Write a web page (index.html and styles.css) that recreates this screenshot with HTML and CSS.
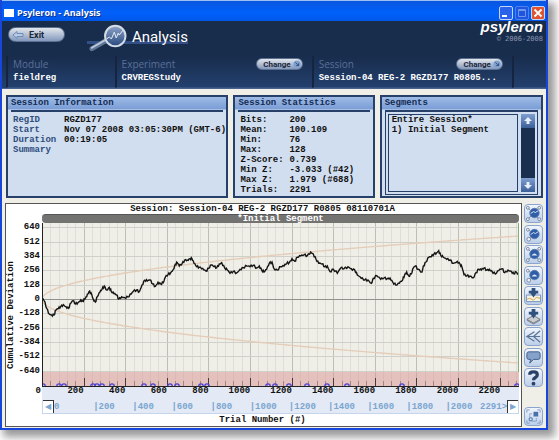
FILE: index.html
```html
<!DOCTYPE html>
<html lang="en">
<head>
    <meta charset="utf-8">
    <title>Psyleron - Analysis</title>
    <link rel="stylesheet" href="styles.css">
</head>
<body>
    <div class="window">
        <div class="titlebar">
            <span class="app-icon"></span>
            <span class="title">Psyleron - Analysis</span>
            <button class="win-btn" aria-label="Minimize"><svg viewBox="0 0 12 12"><path d="M2 9h5" stroke="#fff" stroke-width="2"/></svg></button>
            <button class="win-btn dim" aria-label="Maximize"><svg viewBox="0 0 12 12"><path d="M2.500 2.500h7v7h-7zM2.500 3.500h7" stroke="#6f97f0" fill="none"/></svg></button>
            <button class="win-btn close" aria-label="Close"><svg viewBox="0 0 12 12"><path d="M2.500 2.500l7 7M9.500 2.500l-7 7" stroke="#fff" stroke-width="1.800"/></svg></button>
        </div>

        <header class="header">
            <div class="header-top">
                <button class="pill exit">
                    <svg viewBox="0 0 12 10"><path d="M1 5l4-3.500v2h6v3H5v2z" fill="#b9cbe4" stroke="#6d8cb8"/></svg>
                    Exit
                </button>
                <div class="heading">
                    <svg class="lens" viewBox="0 0 44 34">
                        <defs>
                            <linearGradient id="glass" x1="0" y1="0" x2="0" y2="1">
                                <stop offset="0" stop-color="#8fa5c9"/>
                                <stop offset="1" stop-color="#27487d"/>
                            </linearGradient>
                        </defs>
                        <path d="M5 28l14-8" stroke="#5f7596" stroke-width="5" stroke-linecap="round"/>
                        <path d="M5 27l14-8" stroke="#b9c8dc" stroke-width="2" stroke-linecap="round"/>
                        <circle cx="29" cy="15" r="10.500" fill="url(#glass)" stroke="#d3dbe6" stroke-width="2"/>
                        <path d="M20 18l3-2 2 2 3-7 2 6 2-5 1 2 4-5" fill="none" stroke="#e8eef7"/>
                    </svg>
                    <h1>Analysis</h1>
                </div>
                <div class="brand">
                    <span class="logo">psyleron</span>
                    <span class="copy">© 2006-2008</span>
                </div>
            </div>
            <div class="tabs">
                <div class="tab">
                    <span class="tab-name">Module</span>
                    <span class="tab-value">fieldreg</span>
                </div>
                <div class="tab">
                    <span class="tab-name">Experiment</span>
                    <button class="pill change">Change <svg viewBox="0 0 10 10"><circle cx="5" cy="5" r="4.500" fill="#7f9fcd"/><path d="M3 3l4 4M7 4v3H4" stroke="#27487d" fill="none"/></svg></button>
                    <span class="tab-value">CRVREGStudy</span>
                </div>
                <div class="tab">
                    <span class="tab-name">Session</span>
                    <button class="pill change">Change <svg viewBox="0 0 10 10"><circle cx="5" cy="5" r="4.500" fill="#7f9fcd"/><path d="M3 3l4 4M7 4v3H4" stroke="#27487d" fill="none"/></svg></button>
                    <span class="tab-value">Session-04 REG-2 RGZD177 R0805...</span>
                </div>
                <div class="tab"></div>
            </div>
        </header>

        <div class="panels">
            <section class="panel">
                <h2>Session Information</h2>
                <dl class="info">
                    <dt>RegID</dt><dd>RGZD177</dd>
                    <dt>Start</dt><dd>Nov 07 2008 03:05:30PM (GMT-6)</dd>
                    <dt>Duration</dt><dd>00:19:05</dd>
                    <dt>Summary</dt><dd></dd>
                </dl>
            </section>
            <section class="panel">
                <h2>Session Statistics</h2>
                <dl class="info stats">
                    <dt>Bits:</dt><dd>200</dd>
                    <dt>Mean:</dt><dd>100.109</dd>
                    <dt>Min:</dt><dd>76</dd>
                    <dt>Max:</dt><dd>128</dd>
                    <dt>Z-Score:</dt><dd>0.739</dd>
                    <dt>Min Z:</dt><dd>-3.033 (#42)</dd>
                    <dt>Max Z:</dt><dd>1.979 (#688)</dd>
                    <dt>Trials:</dt><dd>2291</dd>
                </dl>
            </section>
            <section class="panel">
                <h2><label for="segments">Segments</label></h2>
                <div class="listbox">
                    <select id="segments" size="7">
                        <option>Entire Session*</option>
                        <option>1) Initial Segment</option>
                    </select>
                    <div class="scrollbar">
                        <button aria-label="Scroll up"><svg viewBox="0 0 10 10"><path d="M5 1l4 4H6.500v3h-3V5H1z" fill="#e6eefa"/></svg></button>
                        <button aria-label="Scroll down"><svg viewBox="0 0 10 10"><path d="M5 9l4-4H6.500V2h-3v3H1z" fill="#e6eefa"/></svg></button>
                    </div>
                </div>
            </section>
        </div>

        <div class="work">
            <section class="chart">
                <h2 class="chart-title">Session: Session-04 REG-2 RGZD177 R0805 08110701A</h2>
                <div class="chart-body">
                    <div class="y-title">Cumulative Deviation</div>
                    <div class="y-axis">
                        <span>640</span><span>512</span><span>384</span><span>256</span><span>128</span><span>0</span>
                        <span>-128</span><span>-256</span><span>-384</span><span>-512</span><span>-640</span>
                    </div>
                    <div class="plot">
                        <div class="segment-bar">*Initial Segment</div>
                        <svg id="plot" viewBox="0 0 477 164" preserveAspectRatio="none"></svg>
                    </div>
                </div>
                <div class="x-axis">
                    <span class="zero">0</span>
                    <div class="x-labels">
                        <span>200</span><span>400</span><span>600</span><span>800</span><span>1000</span><span>1200</span>
                        <span>1400</span><span>1600</span><span>1800</span><span>2000</span><span>2200</span><span class="rest"></span>
                    </div>
                </div>
                <div class="range">
                    <button class="handle left" aria-label="Range start">◀</button>
                    <div class="range-labels">
                        <span>0</span><span>|200</span><span>|400</span><span>|600</span><span>|800</span><span>|1000</span>
                        <span>|1200</span><span>|1400</span><span>|1600</span><span>|1800</span><span class="last"><i>|2000</i><i>2291&gt;</i></span>
                    </div>
                    <button class="handle right" aria-label="Range end">▶</button>
                </div>
                <div class="x-title">Trial Number (#)</div>
            </section>

            <div class="tools">
                <div class="tool-group">
                    <button class="tool" aria-label="Zoom in both"><svg viewBox="0 0 18 18"><use href="#corners"/><use href="#globe"/><path d="M6 9l3-2 2 1 3-2" stroke="#dce8f8" fill="none"/></svg></button>
                    <button class="tool" aria-label="Zoom out both"><svg viewBox="0 0 18 18"><use href="#side"/><use href="#globe"/><path d="M6 9l3-2 2 1 3-2" stroke="#dce8f8" fill="none"/></svg></button>
                    <button class="tool" aria-label="Zoom in scale"><svg viewBox="0 0 18 18"><use href="#corners"/><use href="#globe"/><path d="M7 10q3-4 6 0z" fill="#dce8f8"/></svg></button>
                    <button class="tool" aria-label="Zoom out scale"><svg viewBox="0 0 18 18"><use href="#side"/><use href="#globe"/><path d="M7 10q3-4 6 0z" fill="#dce8f8"/></svg></button>
                    <button class="tool" aria-label="Save picture"><svg viewBox="0 0 18 18"><path d="M1.500 8.500h15v7h-15z" fill="#f6f3e4" stroke="#6f8fc0"/><path d="M2 13l3-1 4 2 3-3 4 1" stroke="#d9a441" fill="none"/><use href="#down"/></svg></button>
                    <button class="tool" aria-label="Save data"><svg viewBox="0 0 18 18"><path d="M2 12l7-4 7 4-7 4z" fill="#c9ccd0" stroke="#75797f"/><path d="M2 12v1.500l7 4 7-4V12l-7 4z" fill="#85898f"/><use href="#down"/></svg></button>
                    <button class="tool" aria-label="Back"><svg viewBox="0 0 18 18"><path d="M16 3L9 9l7 6M10 4L2 9l8 5M2 9h14" stroke="#5b7595" stroke-width="1.300" fill="none"/></svg></button>
                    <button class="tool" aria-label="Comment"><svg viewBox="0 0 18 18"><path d="M4 3h10q2 0 2 2v4q0 2-2 2H9l-4 4 1-4H4q-2 0-2-2V5q0-2 2-2z" fill="#86a2cb" stroke="#3d5a86"/></svg></button>
                    <button class="tool" aria-label="Help"><svg viewBox="0 0 18 18"><path d="M5 6q0-3 4-3t4 3q0 2-2 3t-2 3" stroke="#2a4167" stroke-width="3.500" fill="none"/><circle cx="9" cy="15.500" r="2" fill="#2a4167"/></svg></button>
                </div>
                <button class="tool" aria-label="Fit window"><svg viewBox="0 0 18 18"><path d="M2 5V2h3M13 2h3v3M16 13v3h-3M5 16H2v-3" stroke="#7f9ac4" fill="none"/><path d="M9 4h5v5H9z" fill="#4a71ab"/><path d="M4.500 10.500h3v3h-3z" fill="#dfe8f5" stroke="#4a71ab"/><path d="M8 14h4v-4M5 9V6h3" stroke="#4a71ab" stroke-dasharray="1 1" fill="none"/></svg></button>
            </div>
        </div>
    </div>

    <!-- shared icon parts -->
    <svg class="defs">
        <symbol id="globe" viewBox="0 0 18 18"><circle cx="10" cy="8.500" r="5" fill="#2f5da6" stroke="#5d80b6"/></symbol>
        <symbol id="corners" viewBox="0 0 18 18"><path d="M3 3l12 12M15 3L3 15" stroke="#76859c"/><g fill="#eef2f8" stroke="#76859c"><circle cx="3" cy="3" r="1.500"/><circle cx="15" cy="3" r="1.500"/><circle cx="3" cy="15" r="1.500"/><circle cx="15" cy="15" r="1.500"/></g></symbol>
        <symbol id="side" viewBox="0 0 18 18"><path d="M3 4l7 4-7 6" stroke="#76859c" fill="none"/><g fill="#eef2f8" stroke="#76859c"><circle cx="3" cy="4" r="1.500"/><circle cx="4" cy="14" r="2"/></g></symbol>
        <symbol id="down" viewBox="0 0 18 18"><path d="M7 1h4v3h3v3h-2l-3 4-3-4H4V4h3z" fill="#31517f"/></symbol>
    </svg>

    <script src="script.js"></script>
</body>
</html>
```

FILE: styles.css
```css
* {
    box-sizing: border-box;
}

body {
    margin: 0;
    padding: 0 11px 11px 0;
    background: #fff;
    font-family: "Liberation Mono", monospace;
    font-size: 9px;
    font-weight: bold;
    line-height: 10px;
    color: #111;
}

h1, h2, dl, dd {
    margin: 0;
    font-size: inherit;
}

button {
    padding: 0;
    border: 0;
    font: inherit;
    cursor: pointer;
}

svg {
    display: block;
}

.defs {
    position: absolute;
    width: 0;
    height: 0;
}

.window {
    border: solid #1746dc;
    border-width: 0 2px 2px;
    background: #efeee7;
    box-shadow: 5px 5px 8px 2px #999;
}

/* title bar */
.titlebar {
    display: flex;
    align-items: center;
    gap: 2px;
    height: 21px;
    padding: 3px 1px 0 2px;
    border-top: 1px solid #9dbdf5;
    background: linear-gradient(#0a56e0, #0061fb 60%, #0057e8);
    color: #fff;
}

.app-icon {
    width: 10px;
    height: 8px;
    background: #fff;
}

.title {
    flex: 1;
    padding-left: 1px;
    font: bold 9px "Open Sans", sans-serif;
    text-shadow: 1px 1px #0a2f8c;
}

.win-btn {
    width: 14px;
    height: 14px;
    border: 1px solid #c3d5fb;
    border-radius: 2px;
    background: #2a62ea;
}

.win-btn.dim {
    border-color: #4f80ee;
    background: #1d56dd;
}

.win-btn.close {
    background: #df5531;
}

/* header */
.header {
    background: linear-gradient(#182c4b 50%, #23406e);
    border-bottom: 1px solid #47628f;
}

.header-top {
    display: flex;
    align-items: flex-start;
    height: 35px;
    padding: 0 3px 0 6px;
}

.pill {
    display: flex;
    align-items: center;
    border: 1px solid #5d7190;
    border-radius: 8px;
    background: linear-gradient(#e3e7ed, #8398bd);
    color: #1c2738;
    font: bold 9px "Roboto", sans-serif;
}

.exit {
    gap: 5px;
    width: 57px;
    height: 15px;
    margin-top: 6px;
    padding-left: 3px;
}

.exit svg {
    width: 12px;
    height: 10px;
}

.heading {
    display: flex;
    width: 101px;
    margin-left: 22px;
    background: linear-gradient(#334f86, #334f86) 0 20px / 100% 3px no-repeat;
}

.lens {
    width: 44px;
    height: 34px;
}

h1 {
    padding: 4px 0 0 2px;
    color: #fff;
    font: 15px/24px "Roboto", sans-serif;
}

.brand {
    display: flex;
    flex-direction: column;
    align-items: flex-end;
    margin-left: auto;
}

.logo {
    height: 14px;
    color: #fff;
    font: italic bold 15px/11px "Liberation Sans", sans-serif;
}

.copy {
    color: #8896b2;
    font: 7px/8px "DejaVu Sans Mono", monospace;
}

.tabs {
    display: grid;
    grid-template-columns: 108fr 196fr 199fr 34fr;
    height: 32px;
    padding-left: 4px;
}

.tab {
    display: grid;
    grid-template-columns: 1fr auto;
    grid-template-rows: 16px 1fr;
    align-items: center;
    padding: 0 9px 3px 5px;
    border-left: 2px solid #15253f;
    border-bottom: 1px solid #35517f;
}

.tab-name {
    color: #5a6f97;
    font: 10px/14px "Open Sans", sans-serif;
}

.tab-value {
    grid-column: 1 / -1;
    color: #fff;
    white-space: nowrap;
}

.change {
    gap: 2px;
    height: 12px;
    padding: 0 1px 0 6px;
    font-size: 8px;
}

.change svg {
    width: 8px;
    height: 8px;
}

/* information panels */
.panels {
    display: grid;
    grid-template-columns: 222fr 141fr 163fr;
    gap: 5px;
    padding: 6px 3px 5px 4px;
}

.panel {
    min-width: 0;
    height: 103px;
    padding: 0 3px;
    border: 2px solid #264069;
    background: linear-gradient(#9fbce6, #7a9dd6 12px, #d1deef 13px);
    white-space: nowrap;
}

.panel h2 {
    height: 15px;
    padding-top: 1px;
    border-bottom: 2px solid #264069;
    color: #142c52;
}

.info {
    display: grid;
    grid-template-columns: 51px 1fr;
    grid-auto-rows: 10px;
    padding: 3px 0 0 2px;
}

.info dt {
    color: #2f4d7d;
}

.stats {
    grid-template-columns: 49px 1fr;
}

.stats dt {
    color: #111;
}

.listbox {
    display: flex;
    gap: 3px;
    height: 83px;
    padding: 2px;
    border: 1px solid #264069;
    border-top: 0;
}

.listbox select {
    flex: 1;
    min-width: 0;
    padding: 0;
    border: 1px solid #264069;
    border-radius: 0;
    outline: 0;
    overflow: hidden;
    background: transparent;
    color: #111;
    font: inherit;
}

.listbox option {
    min-height: 0;
    padding: 0 3px;
    font-weight: bold;
    line-height: 10px;
}

.scrollbar {
    display: flex;
    flex-direction: column;
    justify-content: space-between;
    width: 14px;
    background: #1a2e50;
}

.scrollbar button {
    height: 14px;
    padding: 2px;
    background: linear-gradient(#7f9fd0, #3c5f99);
}

/* chart */
.work {
    display: flex;
    gap: 2px;
    padding: 0 3px 1px 3px;
}

.chart {
    flex: 1;
    min-width: 0;
    padding-right: 2px;
    border: 1px solid #555;
    background: #fff;
}

.chart-title {
    height: 10px;
    text-align: center;
}

.chart-body {
    display: flex;
    height: 173px;
}

.y-title {
    width: 10px;
    padding-top: 18px;
    writing-mode: vertical-rl;
    transform: rotate(180deg);
    text-align: left;
}

.y-axis {
    display: flex;
    flex-direction: column;
    width: 26px;
    padding: 6px 2px 9px 0;
    text-align: right;
}

.y-axis span {
    display: flex;
    flex: 1;
    align-items: center;
    justify-content: flex-end;
}

.plot {
    flex: 1;
    min-width: 0;
    background: #efefe8;
}

.segment-bar {
    height: 9px;
    border-top: 1px solid #555;
    border-radius: 4px;
    background: #737371;
    color: #fff;
    line-height: 8px;
    text-align: center;
}

#plot {
    width: 100%;
    height: 164px;
}

.x-axis {
    display: flex;
    height: 13px;
    line-height: 9px;
}

.zero {
    width: 36px;
    padding-right: 1px;
    text-align: right;
}

.x-labels {
    display: flex;
    flex: 1;
    background: #e3e9f5;
}

.x-labels span {
    flex: 200 1 0;
    min-width: 0;
    text-align: right;
}

.x-labels .rest {
    flex-grow: 91;
}

.range {
    display: flex;
    height: 14px;
    margin-left: 36px;
    border: 1px solid #c5d5ec;
    border-top: 0;
    background: #e3e9f5;
    color: #7ba6d0;
    line-height: 14px;
}

.range-labels {
    display: flex;
    flex: 1;
}

.range-labels span {
    flex: 200 1 0;
    min-width: 0;
}

.range-labels .last {
    display: flex;
    flex-grow: 315;
    justify-content: space-between;
}

.range-labels i {
    font-style: normal;
}

.handle {
    width: 11px;
    background: #fff;
    color: #7ba6d0;
    font: 8px/12px "DejaVu Sans", sans-serif;
}

.handle.left {
    border-top: 1px solid #333;
    border-right: 1px solid #333;
}

.handle.right {
    border-top: 1px solid #333;
    border-left: 1px solid #333;
}

.x-title {
    height: 12px;
    line-height: 13px;
    text-align: center;
}

/* tool buttons */
.tools {
    display: flex;
    flex-direction: column;
    justify-content: space-between;
    padding: 1px 0;
}

.tool-group {
    display: flex;
    flex-direction: column;
    justify-content: space-between;
    height: 183px;
}

.tool {
    width: 19px;
    height: 19px;
    border: 1px solid #8ba5cf;
    border-radius: 4px;
    background: linear-gradient(#f0f5fc, #bccfe9);
}
```

FILE: script.js
```js
var W = 477, H = 164;
var STEP = 41.6;     // width of 200 trials
var ZERO = 76.5;     // y of zero deviation
var svg = document.getElementById("plot");

function add(tag, attrs) {
    var el = document.createElementNS("http://www.w3.org/2000/svg", tag);
    for (var k in attrs) el.setAttribute(k, attrs[k]);
    svg.appendChild(el);
}

function line(x1, y1, x2, y2, color) {
    add("path", { d: "M" + x1 + " " + y1 + "L" + x2 + " " + y2, stroke: color });
}

// red band and grid
add("rect", { x: 0, y: 149, width: W, height: 15, fill: "#e5c1be" });
for (var i = 1; i * STEP / 5 < W; i++) {
    var x = Math.round(i * STEP / 5) + 0.5;
    var major = i % 5 == 0;
    line(x, 0, x, 149, major ? "#bebeb8" : "#deded8");
    line(x, 149, x, 163, major ? "#c9aaa7" : "#dcb9b6");
    line(x, major ? 155 : 158, x, 163, major ? "#443c3c" : "#a18684");
}
for (var j = -5; j <= 5; j++) {
    var gy = Math.round(ZERO - j * 14.35 - 0.5) + 0.5;
    line(0, gy, W, gy, j == 0 ? "#92928d" : "#d0d0ca");
}

// significance envelope
[-1, 1].forEach(function (side) {
    var d = "M0 " + ZERO;
    for (var x = 1; x <= W; x += 2) d += "L" + x + " " + (ZERO + side * 63.5 * Math.sqrt(x / W)).toFixed(1);
    add("path", { d: d, stroke: "#e4cdb9", "stroke-width": 1.4, fill: "none" });
});

// cumulative deviation, three samples per unit
var chunks = [
    { at: -126, pts: "127,295 133,303 140,325 148,342 155,345 162,345 168,330 175,326 182,320 190,314 198,320 206,325 212,310 219,302 226,312 234,308 242,300 248,304 254,298 260,290 267,275 273,278 280,298 286,306 292,290 300,276 306,268 313,258 320,270 328,262 334,275 342,281 350,285 356,297 365,290 374,293 384,291 394,282 400,274 410,270 418,275 426,255 434,241 442,243 450,240 458,252 466,259 474,247 482,252 490,248 496,232 504,224 512,218 520,208 526,193 532,188 538,198 546,192 554,180 562,180 570,176" },
    { at: 444, pts: "6,176 12,190 20,200 28,202 38,205 48,213 56,205 64,195 72,200 80,203 88,192 95,188 104,204 112,210 120,220 130,214 140,219 150,208 160,203 170,198 180,200 190,196 200,204 208,198 215,210 222,216 230,208 238,190 246,186 252,206 262,210 272,200 282,198 290,190 298,188 306,176 314,184 322,172 332,168 342,165 352,167 362,156 370,162 378,178 386,190 396,192 404,200 412,198 420,215 430,208 442,220 452,204 462,206 474,200 484,206 494,210 502,225 514,235 524,240 534,240" },
    { at: 984, pts: "4,250 10,235 20,227 32,238 42,234 52,236 60,234 68,246 78,256 88,250 98,240 104,224 110,216 116,228 124,222 130,204 136,198 144,208 156,216 160,198 168,186 176,172 184,170 192,162 200,158 206,152 212,166 220,172 230,178 240,180 250,190 262,184 270,192 276,202 282,224 290,228 300,228 310,233 318,218 326,208 334,210 342,204 350,210 358,208 366,214 376,222 386,212 396,206 404,218 414,210 424,214 432,222 438,216 444,224" }
];
var pts = [];
chunks.forEach(function (c) {
    c.pts.split(" ").forEach(function (p) {
        var xy = p.split(",");
        pts.push([(+xy[0] + c.at) / 3, (xy[1] - 69) / 3]);
    });
});
var path = "M" + pts[0].join(" ");
for (var n = 1; n < pts.length; n++) {
    var a = pts[n - 1], b = pts[n];
    for (var s = 1; s <= 3; s++) {
        var wob = s == 3 ? 0 : Math.sin(n * 7.3 + s * 2.6) * 1.1;
        path += "L" + (a[0] + (b[0] - a[0]) * s / 3).toFixed(1) + " " + (a[1] + (b[1] - a[1]) * s / 3 + wob).toFixed(1);
    }
}
add("path", { d: path, stroke: "#151515", "stroke-width": 1.4, fill: "none" });

// event markers
[1, 17, 22, 51, 55, 60, 70, 102, 111, 128, 135, 159, 165, 226, 233, 247, 265, 285, 305, 360, 475].forEach(function (x) {
    add("circle", { cx: x, cy: 163, r: 2.2, fill: "none", stroke: "#4a45d8", "stroke-width": 1.3 });
});

// axes
line(0.5, 0, 0.5, H, "#222");
line(0, 163.5, W, 163.5, "#222");
line(W - 0.5, 0, W - 0.5, 149, "#7fae7c");
```
